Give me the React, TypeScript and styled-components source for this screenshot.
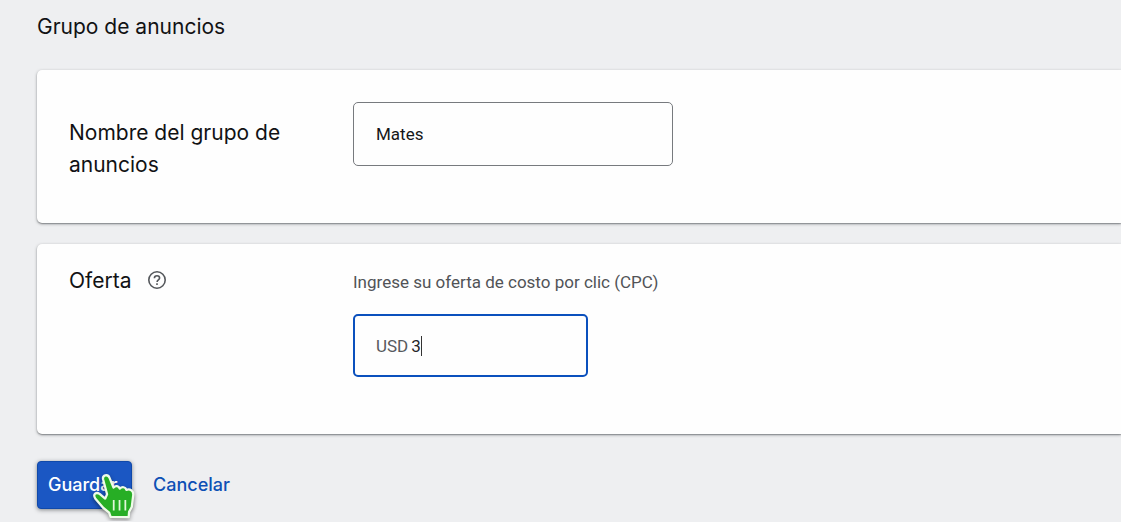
import React, { useState } from "react";
import styled, { createGlobalStyle } from "styled-components";

const GlobalStyle = createGlobalStyle`
  * { box-sizing: border-box; }
  html { overflow-x: hidden; }
  body {
    margin: 0;
    background: #eeeff1;
    color: #111214;
    font-family: Roboto, "Liberation Sans", sans-serif;
    font-size: 17px;
    line-height: 24px;
  }
`;

const displayFont = `Inter, "Open Sans", sans-serif`;

const Page = styled.form`
  padding: 11px 0 12px 37px;
`;

const Title = styled.h1`
  margin: 0 0 27px;
  font: 400 21px/32px ${displayFont};
`;

const Card = styled.section<{ $bottom: number }>`
  display: grid;
  grid-template-columns: 252px 1fr;
  column-gap: 32px;
  margin-bottom: 21px;
  padding: 32px 0 ${(p) => p.$bottom}px 32px;
  background: #fefefe;
  border-radius: 5px 0 0 5px;
  box-shadow: 0 1px 3px rgba(60, 64, 67, 0.5), 0 1px 1px rgba(60, 64, 67, 0.3);
`;

const Bid = styled(Card)`
  padding-top: 21px;
  margin-bottom: 27px;
`;

const Label = styled.label<{ $top?: number }>`
  padding-top: ${(p) => p.$top ?? 0}px;
  font: 400 21px/32px ${displayFont};
`;

const LabelRow = styled.div`
  display: flex;
  align-items: flex-start;
  gap: 16px;
`;

const HelpButton = styled.button`
  display: flex;
  margin: 5px 0 0;
  padding: 0;
  border: 0;
  background: none;
  color: #55585c;
`;

const Field = styled.div`
  display: flex;
  flex-direction: column;
  align-items: flex-start;
`;

const Hint = styled.p`
  margin: 5px 0 20px;
  color: #515357;
`;

const TextInput = styled.input`
  width: 320px;
  max-width: 100%;
  height: 64px;
  padding: 0 22px;
  border: 1px solid #777a7e;
  border-radius: 5px;
  background: transparent;
  color: #151618;
  font: inherit;
  outline: none;
`;

const MoneyBox = styled.div`
  display: flex;
  align-items: center;
  width: 235px;
  max-width: 100%;
  height: 63px;
  padding: 0 20px 0 21px;
  border: 2px solid #0b50bd;
  border-radius: 5px;
`;

const Currency = styled.span`
  margin-right: 3px;
  color: #57595d;
`;

const AmountInput = styled.input`
  width: 10px;
  padding: 0;
  border: 0;
  outline: none;
  background: transparent;
  color: #242528;
  caret-color: transparent;
  font: inherit;
`;

const Caret = styled.span`
  width: 1px;
  height: 20px;
  background: #333;
`;

const Actions = styled.div`
  display: flex;
  align-items: center;
  gap: 21px;
`;

const SaveWrap = styled.div`
  position: relative;
`;

const SaveButton = styled.button`
  display: block;
  height: 48px;
  min-width: 95px;
  padding: 0 10px;
  border: 1px solid #1049aa;
  border-radius: 4px;
  background: #1b57c3;
  color: #fff;
  font: 500 18px/24px ${displayFont};
  text-align: left;
  box-shadow: 0 1px 4px rgba(60, 64, 67, 0.6);
`;

const CancelButton = styled.button`
  padding: 0;
  border: 0;
  background: none;
  color: #0d50b5;
  font: 500 18px/24px ${displayFont};
`;

const Pointer = styled.svg`
  position: absolute;
  left: 54px;
  top: 10px;
  pointer-events: none;
  filter: drop-shadow(0 2px 2px rgba(0, 0, 0, 0.4));
`;

const HelpIcon = () => (
  <svg width="20" height="20" viewBox="0 0 20 20" fill="none" stroke="currentColor" strokeWidth="1.6" aria-hidden="true">
    <circle cx="10" cy="10" r="8.2" />
    <path d="M7.4 8.2c0-1.5 1.1-2.5 2.6-2.5s2.6.9 2.6 2.3c0 1.8-2.5 2-2.5 4" />
    <path d="M10 13.2v1.8" />
  </svg>
);

const HandPointer = () => (
  <Pointer width="50" height="54" viewBox="0 0 48 52" aria-hidden="true">
    <path
      d="M11.6 8.2C10.6 4 16 2.4 17.8 6.6L21.6 16C23.6 13.6 26.6 14.2 27.6 17C30 14.6 33 15.4 34 18.2C37.6 16.6 41 19.4 40.6 23.2L39.2 34.6L36.6 39.4L36.2 44.4L18.8 44.2L17.4 40L11.6 35.4L4 26.4C1.4 22.2 5 20 8.2 22L13.6 26.6L15.4 22.4Z"
      fill="#27ae25"
      stroke="#effbe9"
      strokeWidth="2.2"
      strokeLinejoin="round"
    />
    <path d="M21.8 28v10M27.4 28v10M33 28v10" stroke="#e2f7da" strokeWidth="1.7" />
  </Pointer>
);

export default function App() {
  const [name, setName] = useState("Mates");
  const [bid, setBid] = useState("3");
  return (
    <>
      <GlobalStyle />
      <Page onSubmit={(e) => e.preventDefault()}>
        <Title>Grupo de anuncios</Title>
        <Card $bottom={42}>
          <Label htmlFor="group-name" $top={15}>Nombre del grupo de anuncios</Label>
          <Field>
            <TextInput id="group-name" value={name} onChange={(e) => setName(e.target.value)} />
          </Field>
        </Card>
        <Bid $bottom={57}>
          <LabelRow>
            <Label htmlFor="bid">Oferta</Label>
            <HelpButton type="button" aria-label="Ayuda">
              <HelpIcon />
            </HelpButton>
          </LabelRow>
          <Field>
            <Hint id="bid-hint">Ingrese su oferta de costo por clic (CPC)</Hint>
            <MoneyBox>
              <Currency>USD</Currency>
              <AmountInput id="bid" aria-describedby="bid-hint" value={bid} onChange={(e) => setBid(e.target.value)} />
              <Caret />
            </MoneyBox>
          </Field>
        </Bid>
        <Actions>
          <SaveWrap>
            <SaveButton type="submit">Guardar</SaveButton>
            <HandPointer />
          </SaveWrap>
          <CancelButton type="button">Cancelar</CancelButton>
        </Actions>
      </Page>
    </>
  );
}
